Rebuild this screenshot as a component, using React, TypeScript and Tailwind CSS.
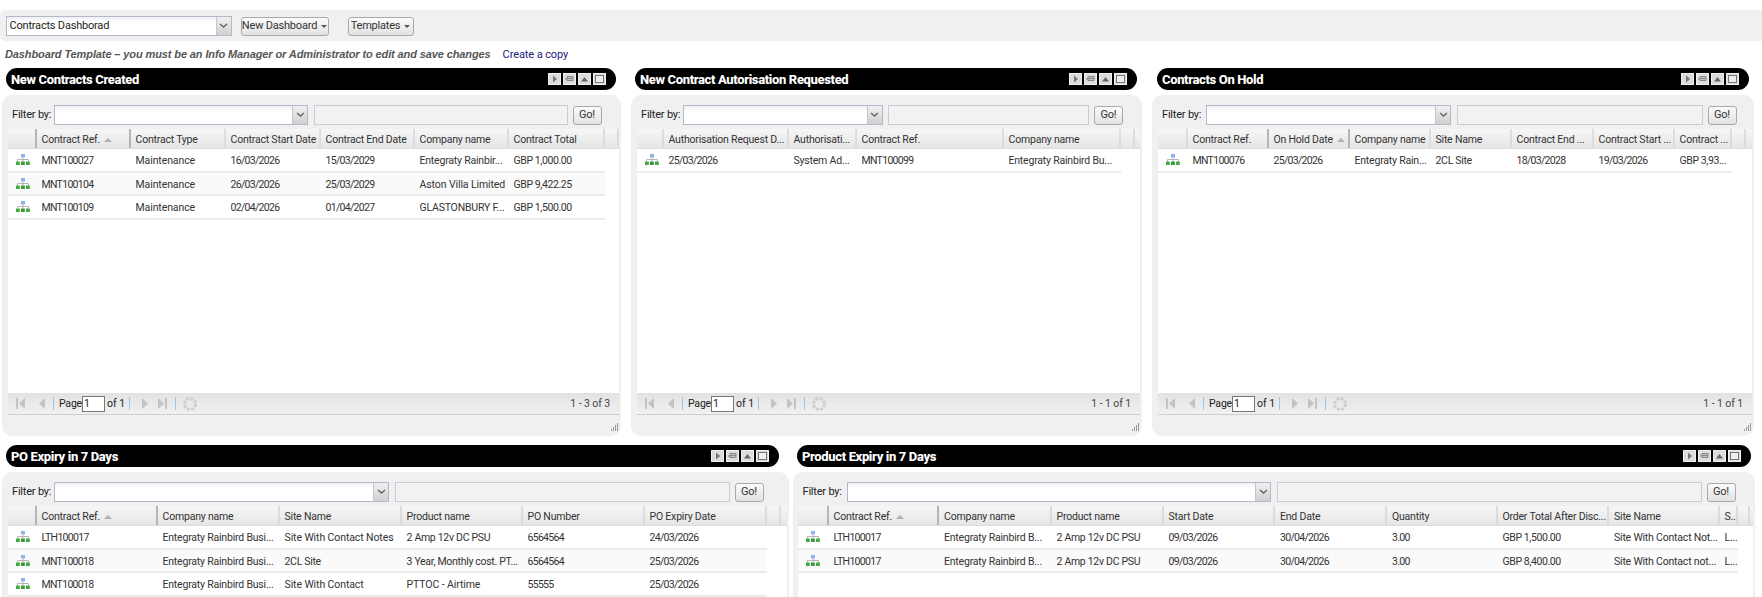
import React from "react";

type Col = { t: string; w: number; sorted?: boolean };
type P = {
  title: string;
  width: number;
  headL: number;
  headR: number;
  selectW: number;
  inputW: number;
  labelL: number;
  cols: Col[];
  rows: string[][];
  pager?: string;
};

function Chevron() {
  return (
    <svg width="9" height="6" viewBox="0 0 9 6">
      <path d="M1 1l3.5 3L8 1" fill="none" stroke="#666" strokeWidth="1.5" />
    </svg>
  );
}

function Caret() {
  return <span className="inline-block ml-1 w-0 h-0 border-x-[3px] border-x-transparent border-t-[3px] border-t-[#555] align-middle" />;
}

function SelectBox({ w, h = 20, text }: { w: number; h?: number; text?: string }) {
  return (
    <div className="flex shrink-0 border border-[#b5b8c8] bg-white bg-gradient-to-b from-[#eef0f4] to-white to-30%" style={{ width: w, height: h }}>
      <div className="flex-1 flex items-center pl-[3px] text-[11px] tracking-[-0.2px] text-[#222] overflow-hidden whitespace-nowrap">{text}</div>
      <div className="w-[15px] flex items-center justify-center bg-gradient-to-b from-[#f0f0f0] to-[#d0d0d0] border-l border-[#c5c5c5]">
        <Chevron />
      </div>
    </div>
  );
}

function Btn({ label, w, caret }: { label: string; w: number; caret?: boolean }) {
  return (
    <div
      className="shrink-0 h-[19px] flex items-center justify-center whitespace-nowrap rounded-[3px] border border-[#a9a9a9] bg-gradient-to-b from-[#fbfbfb] to-[#e2e2e2] text-[11px] tracking-[-0.2px] text-[#333]"
      style={{ width: w }}
    >
      {label}
      {caret && <Caret />}
    </div>
  );
}

function HierIcon() {
  return (
    <svg width="14" height="11" viewBox="0 0 14 11" className="shrink-0">
      <rect x="5" y="0" width="4" height="3.5" fill="#8db4e8" />
      <path d="M7 3.5v2M1.5 7.5V5.5h11v2M7 5.5v2" stroke="#b5b5b5" strokeWidth="1" fill="none" />
      <rect x="0" y="7.5" width="3.8" height="3.5" fill="#45a845" />
      <rect x="5" y="7.5" width="3.8" height="3.5" fill="#3a983a" />
      <rect x="10" y="7.5" width="3.8" height="3.5" fill="#45a845" />
    </svg>
  );
}

function WinBtn({ kind }: { kind: number }) {
  return (
    <div className="w-[13px] h-[12px] flex items-center justify-center bg-[#dcdcdc] border border-[#efefef]">
      <svg width="9" height="8" viewBox="0 0 9 8">
        {kind === 0 && <path d="M3 0.5v7L7 4z" fill="#777" />}
        {kind === 1 && <path d="M0 4h2M2 1.5h6v4H2zM2 3.5h6" fill="#c4c4c4" stroke="#888" strokeWidth="1" />}
        {kind === 2 && <path d="M1 6.5L4.5 2 8 6.5z" fill="#666" />}
        {kind === 3 && <rect x="0.5" y="0.5" width="8" height="7" fill="#eee" stroke="#777" strokeWidth="1" />}
      </svg>
    </div>
  );
}

function PagerIcon({ d }: { d: string }) {
  return (
    <svg width="10" height="11" viewBox="0 0 10 11" className="shrink-0">
      <path d={d} fill="#c4c4c4" />
    </svg>
  );
}

function Pager({ text }: { text: string }) {
  return (
    <div className="h-[22px] shrink-0 flex items-center bg-gradient-to-b from-[#e2e2e2] to-[#f1f1f1] border-b border-[#cfcfcf] text-[10.5px] text-[#222]">
      <div className="ml-[8px] w-[21px]"><PagerIcon d="M0 0h2v11H0zM9 0v11L3 5.5z" /></div>
      <div className="w-[16.5px]"><PagerIcon d="M8 0v11L2 5.5z" /></div>
      <div className="w-px h-[13px] bg-[#9cc4f0]" />
      <span className="ml-[5px] w-[23px] tracking-[-0.2px]">Page</span>
      <div className="w-[23px] h-[16px] border border-[#777] bg-white pl-[1px] leading-[14px]">1</div>
      <span className="ml-[2px] w-[22px] whitespace-nowrap">of 1</span>
      <div className="w-px h-[13px] bg-[#9cc4f0]" />
      <div className="ml-[10px] w-[18px]"><PagerIcon d="M2 0v11l6-5.5z" /></div>
      <div className="w-[17px]"><PagerIcon d="M0 0v11l6-5.5zM7 0h2v11H7z" /></div>
      <div className="w-px h-[13px] bg-[#9cc4f0]" />
      <svg width="16" height="16" viewBox="0 0 16 16" className="ml-[6px] shrink-0">
        <circle cx="8" cy="8" r="5.5" fill="none" stroke="#cfcfc8" strokeWidth="3" strokeDasharray="3 1.3" />
      </svg>
      <span className="ml-auto mr-[9px] text-[#444] tracking-[-0.1px]">{text}</span>
    </div>
  );
}

function cellClass(v: string) {
  if (/^GBP/.test(v)) return "text-[10.5px] tracking-[-0.4px]";
  if (/^(MNT|LTH)?\d+([/.]\d+)*$/.test(v) || /^\d+[/.]/.test(v)) return "text-[10.5px] tracking-[-0.7px]";
  if (/^\d/.test(v)) return "text-[10.5px] tracking-[-0.3px]";
  if (/\.\.\.$/.test(v)) return "text-[10.5px] tracking-[-0.2px]";
  return "text-[10.5px] tracking-[-0.1px]";
}

function Grid({ p }: { p: P }) {
  return (
    <div className="flex-1 min-h-0 flex flex-col overflow-hidden">
      <div className="flex h-[20px] shrink-0 bg-gradient-to-b from-[#f6f6f6] to-[#e6e6e6] border-b border-[#dedede]">
        {p.cols.map((c, i) => {
          const dark = c.sorted || p.cols[i + 1]?.sorted;
          return (
            <div
              key={i}
              className={`shrink-0 flex items-center pl-[5px] pt-[3px] border-r-2 whitespace-nowrap overflow-hidden text-[10.5px] tracking-[-0.2px] text-[#333] ${dark ? "border-[#b5b5b5]" : "border-[#dcdcdc]"}`}
              style={{ width: c.w }}
            >
              {c.t}
              {c.sorted && <span className="ml-[4px] w-0 h-0 border-x-[4px] border-x-transparent border-b-[4px] border-b-[#b0b0b0]" />}
            </div>
          );
        })}
      </div>
      <div className="flex-1 min-h-0 bg-white overflow-hidden">
        {p.rows.map((r, ri) => (
          <div key={ri} className={`flex h-[23.5px] border-b-2 border-[#ececec] w-fit ${ri % 2 ? "bg-[#fafafa]" : "bg-white"}`}>
            <div className="shrink-0 flex items-center pl-[8px]" style={{ width: p.cols[0].w }}>
              <HierIcon />
            </div>
            {r.map((v, i) => (
              <div
                key={i}
                className={`shrink-0 flex items-center pl-[5px] pt-[3px] text-[#333] whitespace-nowrap overflow-hidden ${cellClass(v)}`}
                style={{ width: p.cols[i + 1].w }}
              >
                {v}
              </div>
            ))}
          </div>
        ))}
      </div>
      {p.pager && <Pager text={p.pager} />}
    </div>
  );
}

function Panel({ p, bottom }: { p: P; bottom?: boolean }) {
  return (
    <div className="shrink-0 flex flex-col" style={{ width: p.width }}>
      <div
        className="h-[22px] shrink-0 rounded-full bg-black flex items-center justify-between pl-[5px] pr-[10px]"
        style={{ marginLeft: p.headL, marginRight: p.headR }}
      >
        <span className="text-white text-[13px] font-extrabold tracking-[-0.35px] whitespace-nowrap pt-[2px]">{p.title}</span>
        <div className="flex gap-[2px]">
          {[0, 1, 2, 3].map((k) => (
            <WinBtn key={k} kind={k} />
          ))}
        </div>
      </div>
      <div className={`mt-[5px] flex-1 min-h-0 flex flex-col bg-[#f0f0f0] pl-[5.5px] pr-[2px] ${bottom ? "rounded-t-[10px]" : "rounded-[10px]"}`}>
        <div className="h-[34px] shrink-0 flex items-center text-[11px] text-[#222] pt-[6px]">
          <span className="shrink-0 pl-[4.5px] tracking-[-0.2px] whitespace-nowrap" style={{ width: p.labelL }}>Filter by:</span>
          <SelectBox w={p.selectW} />
          <div className="ml-[5.5px] h-[20px] shrink-0 border border-[#c9ccd6] bg-[#f2f2f2]" style={{ width: p.inputW }} />
          <div className="ml-[5px]"><Btn label="Go!" w={29} /></div>
        </div>
        <Grid p={p} />
        {!bottom && (
          <div className="h-[21px] shrink-0 flex items-end justify-end pb-[5px]">
            <svg width="8" height="8" viewBox="0 0 8 8">
              <path d="M6 0h1v8H6zM4 2h1v6H4zM2 4h1v4H2zM0 6h1v2H0z" fill="#999" />
            </svg>
          </div>
        )}
      </div>
    </div>
  );
}

const top: P[] = [
  {
    title: "New Contracts Created", width: 619, headL: 4, headR: 5, selectW: 254, inputW: 254, labelL: 46.5,
    cols: [
      { t: "", w: 29 }, { t: "Contract Ref.", w: 94, sorted: true }, { t: "Contract Type", w: 95 }, { t: "Contract Start Date", w: 95 },
      { t: "Contract End Date", w: 94 }, { t: "Company name", w: 94 }, { t: "Contract Total", w: 96 }, { t: "", w: 14 },
    ],
    rows: [
      ["MNT100027", "Maintenance", "16/03/2026", "15/03/2029", "Entegraty Rainbir...", "GBP 1,000.00"],
      ["MNT100104", "Maintenance", "26/03/2026", "25/03/2029", "Aston Villa Limited", "GBP 9,422.25"],
      ["MNT100109", "Maintenance", "02/04/2026", "01/04/2027", "GLASTONBURY F...", "GBP 1,500.00"],
    ],
    pager: "1 - 3 of 3",
  },
  {
    title: "New Contract Autorisation Requested", width: 511, headL: 4, headR: 5, selectW: 200, inputW: 201, labelL: 46,
    cols: [
      { t: "", w: 27 }, { t: "Authorisation Request D...", w: 125 }, { t: "Authorisati...", w: 68 }, { t: "Contract Ref.", w: 147 },
      { t: "Company name", w: 117 }, { t: "", w: 14 },
    ],
    rows: [["25/03/2026", "System Ad...", "MNT100099", "Entegraty Rainbird Bu..."]],
    pager: "1 - 1 of 1",
  },
  {
    title: "Contracts On Hold", width: 602, headL: 5, headR: 5, selectW: 245, inputW: 246, labelL: 48.5,
    cols: [
      { t: "", w: 30 }, { t: "Contract Ref.", w: 81 }, { t: "On Hold Date", w: 81, sorted: true }, { t: "Company name", w: 81 },
      { t: "Site Name", w: 81 }, { t: "Contract End ...", w: 82 }, { t: "Contract Start ...", w: 81 }, { t: "Contract ...", w: 57 }, { t: "", w: 14 },
    ],
    rows: [["MNT100076", "25/03/2026", "Entegraty Rain...", "2CL Site", "18/03/2028", "19/03/2026", "GBP 3,93..."]],
    pager: "1 - 1 of 1",
  },
];

const bottom: P[] = [
  {
    title: "PO Expiry in 7 Days", width: 787, headL: 4, headR: 10, selectW: 335, inputW: 335, labelL: 46.5,
    cols: [
      { t: "", w: 29 }, { t: "Contract Ref.", w: 121, sorted: true }, { t: "Company name", w: 122 }, { t: "Site Name", w: 122 },
      { t: "Product name", w: 121 }, { t: "PO Number", w: 122 }, { t: "PO Expiry Date", w: 122 }, { t: "", w: 14 },
    ],
    rows: [
      ["LTH100017", "Entegraty Rainbird Busi...", "Site With Contact Notes", "2 Amp 12v DC PSU", "6564564", "24/03/2026"],
      ["MNT100018", "Entegraty Rainbird Busi...", "2CL Site", "3 Year, Monthly cost. PT...", "6564564", "25/03/2026"],
      ["MNT100018", "Entegraty Rainbird Busi...", "Site With Contact", "PTTOC - Airtime", "55555", "25/03/2026"],
    ],
  },
  {
    title: "Product Expiry in 7 Days", width: 962, headL: 4.5, headR: 4, selectW: 424.5, inputW: 425, labelL: 48.5,
    cols: [
      { t: "", w: 30.5 }, { t: "Contract Ref.", w: 110.5, sorted: true }, { t: "Company name", w: 112.5 }, { t: "Product name", w: 112 },
      { t: "Start Date", w: 111.5 }, { t: "End Date", w: 112 }, { t: "Quantity", w: 110.5 }, { t: "Order Total After Disc...", w: 111.5 },
      { t: "Site Name", w: 110.5 }, { t: "S...", w: 18 }, { t: "", w: 12 },
    ],
    rows: [
      ["LTH100017", "Entegraty Rainbird B...", "2 Amp 12v DC PSU", "09/03/2026", "30/04/2026", "3.00", "GBP 1,500.00", "Site With Contact Not...", "L..."],
      ["LTH100017", "Entegraty Rainbird B...", "2 Amp 12v DC PSU", "09/03/2026", "30/04/2026", "3.00", "GBP 8,400.00", "Site With Contact not...", "L..."],
    ],
  },
];

export default function App() {
  return (
    <div className="h-[597px] w-[1762px] overflow-hidden bg-white flex flex-col font-[Roboto,sans-serif] pt-[10px]">
      <div className="h-[31px] shrink-0 flex items-center bg-[#f0f0f0] rounded-l-[6px] pl-[5.5px] pt-[1px]">
        <SelectBox w={226} h={20} text="Contracts Dashborad" />
        <div className="ml-[9px]"><Btn label="New Dashboard" w={88} caret /></div>
        <div className="ml-[19px]"><Btn label="Templates" w={66} caret /></div>
      </div>
      <div className="h-[27px] shrink-0 flex items-center pl-[5px]">
        <span className="font-['Liberation_Sans',sans-serif] italic font-bold text-[11px] tracking-[-0.11px] text-[#555] whitespace-nowrap">
          Dashboard Template – you must be an Info Manager or Administrator to edit and save changes
        </span>
        <span className="ml-[12px] pt-[2px] text-[11px] tracking-[-0.1px] text-[#1a1a80] whitespace-nowrap">Create a copy</span>
      </div>
      <div className="h-[368px] shrink-0 flex pl-[2px] gap-[10px]">
        {top.map((p) => (
          <Panel key={p.title} p={p} />
        ))}
      </div>
      <div className="flex-1 min-h-0 flex pl-[2px] pt-[9px] gap-[3.5px]">
        {bottom.map((p) => (
          <Panel key={p.title} p={p} bottom />
        ))}
      </div>
    </div>
  );
}
